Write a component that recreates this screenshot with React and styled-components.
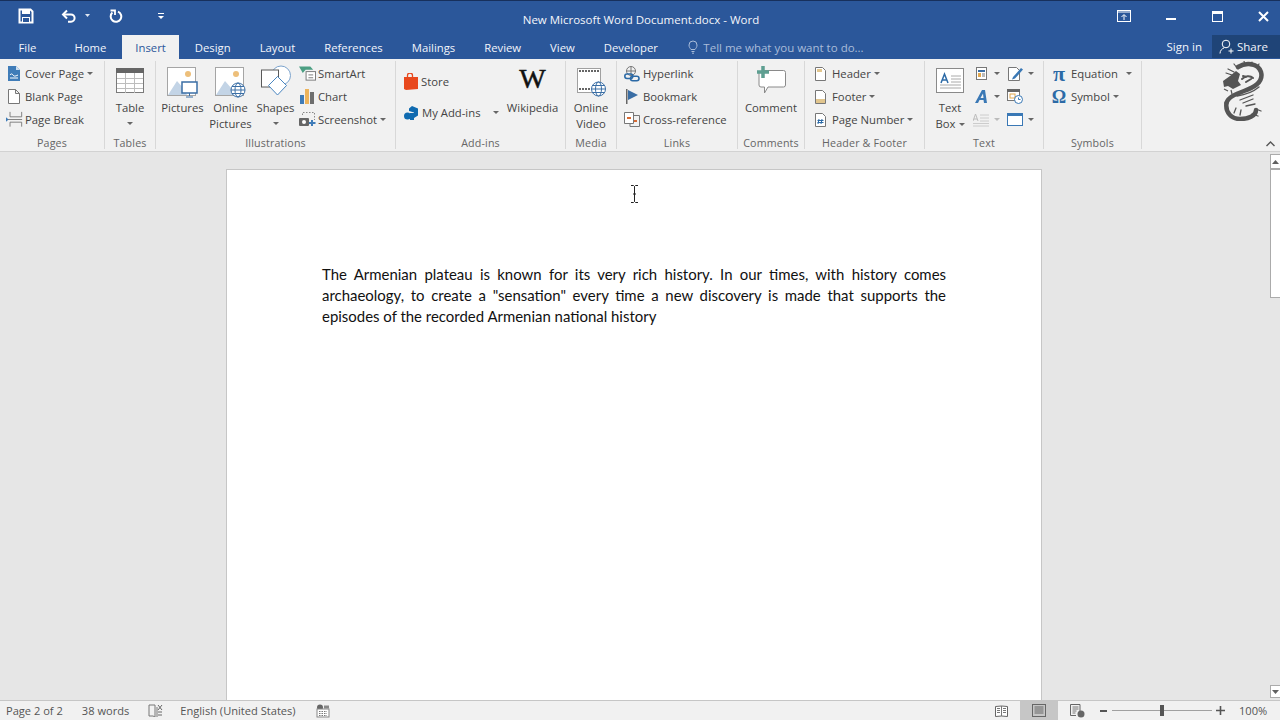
import React from "react";
import styled, { createGlobalStyle } from "styled-components";

const GlobalStyle = createGlobalStyle`
  html, body {
    margin: 0;
    padding: 0;
    width: 1280px;
    height: 720px;
    overflow: hidden;
    font-family: "Open Sans", "Noto Sans", sans-serif;
  }
`;

const Window = styled.div`
  width: 1280px;
  height: 720px;
  display: flex;
  flex-direction: column;
  position: relative;
  overflow: hidden;
  background: #e6e6e6;
`;

/* title bar */
const TitleBar = styled.div`
  height: 35px;
  flex: none;
  box-sizing: border-box;
  border-top: 1px solid #17305c;
  background: #2b579a;
  display: grid;
  grid-template-columns: 1fr auto 1fr;
  align-items: start;
  color: #fff;
`;

const Qat = styled.div`
  display: flex;
  align-items: center;
  padding-left: 18px;
  height: 30px;
`;

const QatSlot = styled.div`
  display: flex;
  align-items: center;
  justify-content: center;
  margin-right: ${({ $gap }) => $gap || 0}px;
`;

const DocTitle = styled.div`
  font-size: 11.5px;
  line-height: 16px;
  color: #f4f6fa;
  padding-left: 2px;
  padding-top: 11px;
`;

const WinButtons = styled.div`
  display: flex;
  justify-content: flex-end;
  align-items: center;
  height: 30px;
  padding-right: 11px;
  gap: 35.5px;
`;

/* tab row */
const TabRow = styled.div`
  height: 24px;
  flex: none;
  background: #2b579a;
  display: flex;
  align-items: stretch;
  color: #fff;
`;

const Tab = styled.div`
  padding: 0 ${({ $active }) => ($active ? 13 : 14.5)}px;
  margin: 0 ${({ $active }) => ($active ? 1.5 : 0)}px;
  display: flex;
  align-items: center;
  font-size: 11.3px;
  color: ${({ $active }) => ($active ? "#2b579a" : "#f2f5fa")};
  background: ${({ $active }) => ($active ? "#f1f1f1" : "transparent")};
`;

const FileTab = styled(Tab)`
  padding: 0 23.5px 0 18.5px;
`;

const TellMe = styled.div`
  display: flex;
  align-items: center;
  gap: 5px;
  margin-left: 16px;
  font-size: 11.5px;
  color: #a9bcd9;
`;

const RightTabs = styled.div`
  margin-left: auto;
  display: flex;
  align-items: stretch;
`;

const SignIn = styled.div`
  display: flex;
  align-items: center;
  font-size: 11.5px;
  padding: 0 10px 2px 0;
  color: #f2f5fa;
`;

const Share = styled.div`
  width: 68px;
  box-sizing: border-box;
  margin-bottom: 1px;
  padding: 0 0 1px 7px;
  background: #1f4477;
  display: flex;
  align-items: center;
  gap: 3px;
  font-size: 11.5px;
  color: #f2f5fa;
`;

/* ribbon */
const Ribbon = styled.div`
  height: 93px;
  flex: none;
  box-sizing: border-box;
  background: #f1f1f1;
  border-bottom: 1px solid #d2d2d2;
  display: flex;
  position: relative;
  color: #444;
`;

const Group = styled.div`
  width: ${({ $w }) => $w}px;
  flex: none;
  box-sizing: border-box;
  height: 88px;
  margin-top: 2px;
  border-right: 1px solid #d8d8d8;
  display: flex;
  flex-direction: column;
`;

const GroupBody = styled.div`
  height: 75px;
  flex: none;
  display: flex;
  padding-left: ${({ $pl }) => $pl || 0}px;
`;

const GroupLabel = styled.div`
  flex: 1;
  text-align: center;
  font-size: 10.7px;
  letter-spacing: 0.15px;
  line-height: 14px;
  color: #666;
`;

const SmallStack = styled.div`
  display: flex;
  flex-direction: column;
  padding-top: 1px;
  margin-left: ${({ $ml }) => $ml || 0}px;
  margin-right: ${({ $mr }) => $mr || 0}px;
`;

const SmallButton = styled.div`
  height: ${({ $h }) => $h || 23}px;
  display: flex;
  align-items: center;
  font-size: 11.3px;
  white-space: nowrap;
  color: #444;
`;

const IconBox = styled.span`
  width: ${({ $w }) => $w || 16}px;
  margin-right: ${({ $mr }) => $mr ?? 2}px;
  display: inline-flex;
  justify-content: center;
  align-items: center;
  flex: none;
`;

const Caret = styled.span`
  display: inline-block;
  width: 0;
  height: 0;
  margin-left: ${({ $ml }) => $ml ?? 3}px;
  vertical-align: middle;
  border-left: 3px solid transparent;
  border-right: 3px solid transparent;
  border-top: 3px solid ${({ $dim }) => ($dim ? "#bbb" : "#666")};
`;

const LargeCaret = styled(Caret)`
  margin: 6px 0 0 0;
`;

const LargeButton = styled.div`
  width: ${({ $w }) => $w}px;
  margin-left: ${({ $ml }) => $ml || 0}px;
  flex: none;
  display: flex;
  flex-direction: column;
  align-items: center;
  font-size: 11.3px;
  line-height: 16px;
  text-align: center;
  color: #444;
`;

const LargeIcon = styled.div`
  height: 39px;
  box-sizing: border-box;
  padding-bottom: ${({ $pb }) => $pb || 0}px;
  display: flex;
  align-items: flex-end;
  justify-content: center;
`;

const LargeText = styled.div`
  white-space: nowrap;
`;

const DragonBox = styled.div`
  position: absolute;
  left: 1222px;
  top: 2px;
`;

const Collapse = styled.div`
  position: absolute;
  right: 5px;
  bottom: 4px;
  display: flex;
`;

/* document */
const DocArea = styled.div`
  flex: 1;
  min-height: 0;
  display: flex;
  background: #e6e6e6;
  overflow: hidden;
`;

const PageColumn = styled.div`
  flex: 1;
  display: flex;
  padding-top: 17px;
  padding-left: 226px;
`;

const Page = styled.div`
  width: 816px;
  height: 700px;
  box-sizing: border-box;
  background: #fff;
  border: 1px solid #c6c6c6;
  padding: 94px 95px 0 95px;
`;

const Paragraph = styled.p`
  margin: 0;
  font-family: "Lato", "Open Sans", sans-serif;
  font-size: 14.95px;
  line-height: 21px;
  color: #111;
  text-align: justify;
`;

const ScrollBar = styled.div`
  width: 10px;
  flex: none;
  display: flex;
  flex-direction: column;
  background: #e6e6e6;
  padding: 2px 0;
`;

const ScrollArrow = styled.div`
  height: 16px;
  flex: none;
  box-sizing: border-box;
  background: #fff;
  border: 1px solid #ababab;
  border-bottom-width: 2px;
  border-right: none;
  display: flex;
  align-items: center;
  justify-content: center;
`;

const ScrollArrowDown = styled(ScrollArrow)`
  height: 13px;
  border-bottom-width: 1px;
`;

const ScrollThumb = styled.div`
  height: 128px;
  flex: none;
  box-sizing: border-box;
  background: #fff;
  border: 1px solid #ababab;
  border-top: none;
  border-right: none;
`;

const ScrollSpace = styled.div`
  flex: 1;
`;

const CursorBox = styled.div`
  position: absolute;
  left: 630px;
  top: 185px;
  display: flex;
`;

/* status bar */
const StatusBar = styled.div`
  height: 20px;
  flex: none;
  box-sizing: border-box;
  border-top: 1px solid #c6c6c6;
  background: #f1f1f1;
  display: flex;
  align-items: stretch;
  font-size: 11.1px;
  color: #555;
`;

const StatusItem = styled.div`
  display: flex;
  align-items: center;
  margin-left: ${({ $ml }) => $ml || 0}px;
  white-space: nowrap;
`;

const StatusRight = styled.div`
  margin-left: auto;
  display: flex;
  align-items: stretch;
`;

const ViewButton = styled.div`
  width: 38px;
  display: flex;
  align-items: center;
  justify-content: center;
  background: ${({ $active }) => ($active ? "#c6c6c6" : "transparent")};
`;

const ZoomBar = styled.div`
  display: flex;
  align-items: center;
  margin-left: 4px;
  gap: 4px;
`;

const ZoomTrack = styled.div`
  width: 100px;
  height: 1px;
  background: #a0a0a0;
  position: relative;
`;

const ZoomKnob = styled.div`
  position: absolute;
  left: 48px;
  top: -5px;
  width: 4px;
  height: 11px;
  background: #555;
`;

const ZoomPct = styled.div`
  width: 41px;
  margin-left: 14px;
  display: flex;
  align-items: center;
`;

const Pi = styled.span`
  font-family: "Liberation Serif", serif;
  font-size: ${({ $size }) => $size}px;
  font-weight: 700;
  color: #2c6aa6;
  line-height: 16px;
`;

const WikiW = styled.span`
  display: block;
  font-family: "Liberation Serif", serif;
  font-size: 28px;
  line-height: 28px;
  color: #111;
  -webkit-text-stroke: 0.5px #111;
`;

const Ico = ({ w, h, children }) => (
  <svg width={w} height={h} viewBox={`0 0 ${w} ${h}`} fill="none" style={{ display: "block" }}>
    {children}
  </svg>
);

const SaveIcon = () => (
  <Ico w={16} h={16}>
    <path d="M1.5 1.5h11l2 2v11h-13z" stroke="#fff" strokeWidth="2" />
    <rect x="4" y="2" width="8" height="4" fill="#fff" />
    <rect x="4.5" y="9.5" width="7" height="5" stroke="#fff" fill="#2b579a" />
  </Ico>
);
const UndoIcon = () => (
  <Ico w={16} h={14}>
    <path d="M6 1.5L2 5.5l4 4" stroke="#fff" strokeWidth="2" />
    <path d="M2.5 5.5H10a3.6 3.6 0 0 1 0 7.2H7" stroke="#fff" strokeWidth="2" />
  </Ico>
);
const RedoIcon = () => (
  <Ico w={14} h={14}>
    <path d="M9 2.6A5.300 5.300 0 1 1 3.400 3.600" stroke="#fff" strokeWidth="2" />
    <path d="M1.500 1.500h4.500v4.500" stroke="#fff" strokeWidth="1.800" />
  </Ico>
);
const CustomizeIcon = () => (
  <Ico w={8} h={8}>
    <path d="M1 1.5h6" stroke="#fff" />
    <path d="M1 4h6L4 7z" fill="#fff" />
  </Ico>
);
const WhiteCaret = () => (
  <Ico w={7} h={4}>
    <path d="M1 0h5L3.500 3z" fill="#dfe6f1" />
  </Ico>
);
const DisplayIcon = () => (
  <Ico w={14} h={12}>
    <rect x=".5" y=".5" width="13" height="11" stroke="#fff" />
    <path d="M1 2h12" stroke="#fff" />
    <path d="M7 10V5M4.500 7L7 4.500 9.500 7" stroke="#fff" />
  </Ico>
);
const MinIcon = () => (
  <Ico w={10} h={12}>
    <rect y="8" width="10" height="2" fill="#fff" />
  </Ico>
);
const MaxIcon = () => (
  <Ico w={11} h={11}>
    <rect x=".5" y=".5" width="10" height="10" stroke="#fff" />
    <rect x="1" y="1" width="9" height="2" fill="#fff" />
  </Ico>
);
const CloseIcon = () => (
  <Ico w={11} h={11}>
    <path d="M1 1l9 9M10 1l-9 9" stroke="#fff" strokeWidth="2" />
  </Ico>
);
const BulbIcon = () => (
  <Ico w={10} h={14}>
    <path d="M3 9.500C2 8 1 7.200 1 5a4 4 0 0 1 8 0c0 2.200-1 3-2 4.500z" stroke="#a9bcd9" />
    <path d="M3.500 11.500h3M4 13.200h2" stroke="#a9bcd9" />
  </Ico>
);
const ShareIcon = () => (
  <Ico w={15} h={15}>
    <circle cx="7" cy="5" r="3.800" stroke="#fff" />
    <path d="M1 14.500c0-3 2.200-5 4.200-5.600M9.500 12h5M12 9.500v5" stroke="#fff" />
  </Ico>
);

const CoverIcon = () => (
  <Ico w={12} h={15}>
    <path d="M0 0h8l4 4v11H0z" fill="#3f7cb8" />
    <path d="M8 0v4h4" fill="#cfe0f0" />
    <path d="M2 9c1-1.500 2-1.500 3 0s2 1.500 5 0M2 12h8" stroke="#fff" />
  </Ico>
);
const BlankIcon = () => (
  <Ico w={12} h={15}>
    <path d="M.5.5h7l4 4v10H.5zM7.500.5v4h4" stroke="#777" fill="#fff" />
  </Ico>
);
const BreakIcon = () => (
  <Ico w={19} h={17}>
    <path d="M4.500 0v5.500h13V0M4.500 16.500V11.500h13v5" stroke="#777" />
    <path d="M1 8.500h17" stroke="#777" />
    <path d="M0 6l3 2.500L0 11z" fill="#3f7cb8" />
  </Ico>
);
const TableIcon = () => (
  <Ico w={28} h={25}>
    <rect x=".5" y=".5" width="27" height="24" fill="#fff" stroke="#7a7a7a" />
    <rect width="28" height="5" fill="#666" />
    <path d="M1 10.500h26M1 15.500h26M1 20.500h26M9.500 5v20M18.500 5v20" stroke="#bdbdbd" />
  </Ico>
);
const PictureBase = () => (
  <>
    <rect x=".5" y=".5" width="28" height="28" fill="#fff" stroke="#a5a5a5" />
    <circle cx="21" cy="7" r="3" fill="#edbf7a" />
    <path d="M1 28l9-14 7 8 3 6z" fill="#c3d4e6" />
  </>
);
const PicturesIcon = () => (
  <Ico w={31} h={31}>
    <PictureBase />
    <rect x="15" y="15" width="15" height="11" fill="#fff" stroke="#3a6ea5" strokeWidth="1.500" />
    <path d="M22.500 26v3M19 30h7" stroke="#3a6ea5" />
  </Ico>
);
const OnlinePicturesIcon = () => (
  <Ico w={31} h={31}>
    <PictureBase />
    <circle cx="23" cy="23" r="7" fill="#fff" stroke="#3a6ea5" />
    <ellipse cx="23" cy="23" rx="3" ry="7" stroke="#3a6ea5" />
    <path d="M16 23h14M17 19.500h12M17 26.500h12" stroke="#3a6ea5" />
  </Ico>
);
const ShapesIcon = () => (
  <Ico w={30} h={31}>
    <circle cx="20" cy="10.500" r="9.500" fill="#fff" stroke="#7ba3cd" />
    <rect x=".5" y="5" width="17" height="17" fill="#fff" stroke="#5a5a5a" />
    <path d="M16.500 11.500l9 9-9 9.500-9-9.500z" fill="#fff" stroke="#4a86c0" />
  </Ico>
);
const SmartArtIcon = () => (
  <Ico w={18} h={17}>
    <path d="M0 1h12l3 3.500H7L4 8z" fill="#4c9f83" />
    <rect x="7.500" y="6.500" width="10" height="9" fill="#fff" stroke="#777" />
    <path d="M10 10h5M10 13h5" stroke="#777" />
  </Ico>
);
const ChartIcon = () => (
  <Ico w={15} h={15}>
    <rect y="6" width="4" height="9" fill="#3f7cb8" />
    <rect x="5" width="4" height="15" fill="#edb45c" />
    <rect x="10" y="3" width="4" height="12" fill="#6e6e6e" />
  </Ico>
);
const ScreenshotIcon = () => (
  <Ico w={17} h={15}>
    <path d="M3.500 3V.5h12V8" stroke="#888" strokeDasharray="1.500 1.500" />
    <rect y="6" width="10" height="8" rx="1" fill="#666" />
    <circle cx="5" cy="10" r="2" fill="#fff" />
    <path d="M13 8v6M10 11h6.500" stroke="#3f7cb8" strokeWidth="2" />
  </Ico>
);
const StoreIcon = () => (
  <Ico w={14} h={17}>
    <path d="M0 4h14v12l-12 1L0 16z" fill="#e8481d" />
    <path d="M3.500 5V2.500a2.500 2.500 0 0 1 5 0V5" stroke="#e8481d" strokeWidth="1.300" />
  </Ico>
);
const AddinsIcon = () => (
  <Ico w={14} h={14}>
    <path d="M8 0l6 2.500v7L10 12V6.500L5 5V2.500z" fill="#0f6ab0" />
    <circle cx="3.500" cy="10" r="3.500" fill="#0f6ab0" />
    <rect x="6" y="7" width="4" height="7" fill="#0f6ab0" />
  </Ico>
);
const VideoIcon = () => (
  <Ico w={29} h={29}>
    <rect x=".5" y=".5" width="23" height="24" fill="#fff" stroke="#a0a0a0" />
    <path d="M2 3h20M2 21h12" stroke="#666" strokeWidth="2" strokeDasharray="2 1" />
    <circle cx="21.500" cy="21" r="7" fill="#fff" stroke="#3a6ea5" />
    <ellipse cx="21.500" cy="21" rx="3" ry="7" stroke="#3a6ea5" />
    <path d="M14.500 21h14M15.500 17.500h12M15.500 24.500h12" stroke="#3a6ea5" />
  </Ico>
);
const HyperlinkIcon = () => (
  <Ico w={16} h={16}>
    <circle cx="7" cy="5" r="4.500" stroke="#777" />
    <path d="M2.500 5h9M7 .5v9" stroke="#777" />
    <rect x=".8" y="8" width="8" height="4.500" rx="2.200" stroke="#2c6aa6" strokeWidth="1.600" />
    <rect x="6.500" y="10.200" width="8.500" height="4.500" rx="2.200" stroke="#2c6aa6" strokeWidth="1.600" />
  </Ico>
);
const BookmarkIcon = () => (
  <Ico w={12} h={15}>
    <rect width="1.500" height="15" fill="#666" />
    <path d="M2 1l10 5-10 5z" fill="#3a6ea5" />
  </Ico>
);
const CrossRefIcon = () => (
  <Ico w={16} h={15}>
    <path d="M.5.5h9v11h-9z" fill="#fff" stroke="#777" />
    <path d="M10 3.500h5.500v11H6V12" stroke="#777" />
    <path d="M3 6h4" stroke="#d96a32" strokeWidth="2" />
    <path d="M10 9h3" stroke="#d96a32" strokeWidth="2" />
  </Ico>
);
const CommentIcon = () => (
  <Ico w={31} h={30}>
    <path d="M7 5.500h20.500a2 2 0 0 1 2 2V20a2 2 0 0 1-2 2H12l-3.500 6v-6H5a2 2 0 0 1-2-2V8" fill="#fff" stroke="#8a8a8a" />
    <path d="M7 1v12M1 7h12" stroke="#5e9f91" strokeWidth="3.500" />
  </Ico>
);
const HeaderIcon = () => (
  <Ico w={11} h={14}>
    <path d="M.5.5h7l3 3v10H.5z" fill="#fff" stroke="#777" />
    <rect x="2" y="2" width="5" height="3" fill="#e2c68e" />
  </Ico>
);
const FooterIcon = () => (
  <Ico w={11} h={14}>
    <path d="M.5.5h7l3 3v10H.5z" fill="#fff" stroke="#777" />
    <rect x="1" y="9" width="9" height="4" fill="#e2c68e" />
  </Ico>
);
const PageNumIcon = () => (
  <Ico w={11} h={14}>
    <path d="M.5.5h7l3 3v10H.5z" fill="#fff" stroke="#777" />
    <path d="M4 6l-1 5M7 6l-1 5M2.500 7.500h6M2.500 9.500h6" stroke="#2c6aa6" />
  </Ico>
);
const TextBoxIcon = () => (
  <Ico w={28} h={25}>
    <rect x=".5" y=".5" width="27" height="24" fill="#fff" stroke="#8a8a8a" />
    <path d="M15 8h10M15 11h10M15 14h10M4 17h21M4 20h21" stroke="#aaa" />
    <path d="M5 15l3.500-9L12 15M6.200 12h4.600" stroke="#2c6aa6" strokeWidth="1.500" />
  </Ico>
);
const QuickPartsIcon = () => (
  <Ico w={11} h={13}>
    <rect x=".5" y=".5" width="10" height="12" fill="#fff" stroke="#777" />
    <rect x="2" y="3" width="7" height="2" fill="#3a6ea5" />
    <rect x="2" y="6" width="3" height="4" fill="#e2a84e" />
    <path d="M6 7h3M6 9h3" stroke="#777" />
  </Ico>
);
const SignatureIcon = () => (
  <Ico w={15} h={15}>
    <path d="M.5 1.500h8l3 3v10H.5z" fill="#fff" stroke="#777" />
    <path d="M5 11l8-9 2 1.500-8 9-3 1z" fill="#3a78b5" />
  </Ico>
);
const WordArtIcon = () => (
  <Ico w={12} h={13}>
    <path d="M0 13L7 0h3l2 13H9l-.5-3H4.500l-1.500 3zM5.500 8h3L8 3.500z" fill="#3a78b5" fillRule="evenodd" />
  </Ico>
);
const DateIcon = () => (
  <Ico w={16} h={15}>
    <rect x=".5" y=".5" width="12" height="11" fill="#fff" stroke="#777" />
    <rect width="13" height="3" fill="#666" />
    <rect x="3" y="5" width="5" height="4" stroke="#e2a84e" />
    <circle cx="11.500" cy="10.500" r="4" fill="#fff" stroke="#3a78b5" />
    <path d="M11.500 8.500v2h2" stroke="#3a78b5" />
  </Ico>
);
const DropCapIcon = () => (
  <Ico w={16} h={14}>
    <path d="M0 8l2.500-7L5 8M1 6h3" stroke="#bbb" />
    <path d="M7 2h9M7 5h9M7 8h9M0 10.500h16M0 13h16" stroke="#ccc" />
  </Ico>
);
const ObjectIcon = () => (
  <Ico w={16} h={13}>
    <rect x=".5" y=".5" width="15" height="12" fill="#fff" stroke="#3a78b5" />
    <rect width="16" height="3" fill="#3a78b5" />
  </Ico>
);

const DragonIcon = () => (
  <svg width="42" height="60" viewBox="0 0 42 60" fill="none" style={{ display: "block", filter: "blur(0.6px)" }}>
    <g stroke="#555" strokeLinecap="round">
      <path d="M16 6C24 1 36 2 39 11 42 22 30 27 22 30 14 33 6 36 4.500 42" strokeWidth="4.500" />
      <path d="M4.500 42C3 52 10 58 18 58 26 58 34 55 34 49" strokeWidth="4.500" />
      <path d="M6 8l6 3M4 12l6 2M12 3l4 5M22 0l1 4M30 1l-1 4M37 3l-2 3" strokeWidth="1.200" />
      <path d="M20 18c3-3 8-4 11-1M24 21l5-3M21 15l3 1" strokeWidth="2" />
      <path d="M15 35C22 34 31 31 37 26M18 39l13-5M21 42l10-4M24 45l9-2" strokeWidth="1.300" />
      <path d="M34 48l5 2M30 53l6 2M12 52l2-5M18 54l1-5" strokeWidth="1.300" />
    </g>
    <path d="M1 20l7-5 6-5 4 3-2 7 3 4-8 4-5-3-4 1z" fill="#555" />
    <path d="M2 28l4 2M9 29l1 4" stroke="#555" strokeWidth="1.200" />
  </svg>
);

const Chevron = () => (
  <Ico w={9} h={6}>
    <path d="M.5 5L4.500 1l4 4" stroke="#555" strokeWidth="1.400" />
  </Ico>
);
const ScrollTri = ({ down }) => (
  <Ico w={7} h={4}>
    <path d={down ? "M0 0h7L3.500 4z" : "M0 4h7L3.500 0z"} fill="#606060" />
  </Ico>
);
const IBeam = () => (
  <Ico w={9} h={18}>
    <path d="M1 .5h2.500L4.500 1.500 5.500.5H8M4.500 1.500v15M1 17.500h2.500l1-1 1 1H8M3 9h3" stroke="#222" />
  </Ico>
);
const ProofIcon = () => (
  <Ico w={15} h={13}>
    <path d="M7 1H1v11h4l2 1V1zM9 3v10" stroke="#777" />
    <path d="M10 1l4 5M14 1l-4 5M10 8h4M10 11h4" stroke="#666" />
  </Ico>
);
const MacroIcon = () => (
  <Ico w={14} h={14}>
    <circle cx="4" cy="3.500" r="3" fill="#666" />
    <rect x="1" y="5" width="12" height="8" fill="#fff" stroke="#888" />
    <path d="M8 1.500h5v3H8z" fill="#888" />
    <path d="M3 7.500h8M3 9.500h8M3 11.500h8" stroke="#777" strokeDasharray="1.500 1" />
  </Ico>
);
const ReadIcon = () => (
  <Ico w={13} h={12}>
    <path d="M.5 1.500L6.500 1l6 .5v10l-6-.5-6 .5z" stroke="#666" fill="#fff" />
    <path d="M6.500 1v10M2 3.500h3M2 5.500h3M2 7.500h3M8 3.500h3M8 5.500h3M8 7.500h3" stroke="#777" />
  </Ico>
);
const PrintIcon = () => (
  <Ico w={14} h={13}>
    <rect x=".5" y=".5" width="13" height="12" stroke="#666" />
    <path d="M2.500 3h9M2.500 5h9M2.500 7h9M2.500 9h9" stroke="#666" />
  </Ico>
);
const WebIcon = () => (
  <Ico w={15} h={14}>
    <path d="M10 8V.5H.5v11H6" stroke="#666" />
    <path d="M2.500 3h6M2.500 5h6M2.500 7h4M2.500 9h3" stroke="#777" />
    <circle cx="11" cy="10" r="3.500" fill="#666" />
  </Ico>
);
const Minus = () => (
  <Ico w={8} h={8}>
    <rect y="3" width="7" height="2" fill="#555" />
  </Ico>
);
const Plus = () => (
  <Ico w={9} h={9}>
    <path d="M0 4.500h9M4.500 0v9" stroke="#555" strokeWidth="1.600" />
  </Ico>
);

const tabs = ["Home", "Insert", "Design", "Layout", "References", "Mailings", "Review", "View", "Developer"];

function Small({ icon, label, caret, w, mr }) {
  return (
    <SmallButton>
      <IconBox $w={w} $mr={mr}>{icon}</IconBox>
      {label}
      {caret && <Caret />}
    </SmallButton>
  );
}

function Large({ w, ml, pb, icon, lines, caret, inlineCaret }) {
  return (
    <LargeButton $w={w} $ml={ml}>
      <LargeIcon $pb={pb}>{icon}</LargeIcon>
      {lines.map((l, i) => (
        <LargeText key={l}>
          {l}
          {inlineCaret && i === lines.length - 1 && <Caret />}
        </LargeText>
      ))}
      {caret && <LargeCaret />}
    </LargeButton>
  );
}

export default function App() {
  return (
    <Window>
      <GlobalStyle />
      <TitleBar>
        <Qat>
          <QatSlot $gap={27}><SaveIcon /></QatSlot>
          <QatSlot $gap={7}><UndoIcon /></QatSlot>
          <QatSlot $gap={18}><WhiteCaret /></QatSlot>
          <QatSlot $gap={34}><RedoIcon /></QatSlot>
          <QatSlot><CustomizeIcon /></QatSlot>
        </Qat>
        <DocTitle>New Microsoft Word Document.docx - Word</DocTitle>
        <WinButtons>
          <DisplayIcon />
          <MinIcon />
          <MaxIcon />
          <CloseIcon />
        </WinButtons>
      </TitleBar>

      <TabRow>
        <FileTab>File</FileTab>
        {tabs.map((t) => (
          <Tab key={t} $active={t === "Insert"}>{t}</Tab>
        ))}
        <TellMe>
          <BulbIcon />
          Tell me what you want to do...
        </TellMe>
        <RightTabs>
          <SignIn>Sign in</SignIn>
          <Share>
            <ShareIcon />
            Share
          </Share>
        </RightTabs>
      </TabRow>

      <Ribbon>
        <Group $w={105}>
          <GroupBody $pl={6}>
            <SmallStack>
              <Small icon={<CoverIcon />} label="Cover Page" caret w={15} mr={4} />
              <Small icon={<BlankIcon />} label="Blank Page" w={15} mr={4} />
              <Small icon={<BreakIcon />} label="Page Break" w={17} mr={2} />
            </SmallStack>
          </GroupBody>
          <GroupLabel>Pages</GroupLabel>
        </Group>

        <Group $w={51}>
          <GroupBody>
            <Large w={50} pb={7} icon={<TableIcon />} lines={["Table"]} caret />
          </GroupBody>
          <GroupLabel>Tables</GroupLabel>
        </Group>

        <Group $w={240}>
          <GroupBody $pl={3}>
            <Large w={47} pb={2} icon={<PicturesIcon />} lines={["Pictures"]} />
            <Large w={47} ml={1} pb={2} icon={<OnlinePicturesIcon />} lines={["Online", "Pictures"]} />
            <Large w={41} ml={1} pb={4} icon={<ShapesIcon />} lines={["Shapes"]} caret />
            <SmallStack $ml={3}>
              <Small icon={<SmartArtIcon />} label="SmartArt" w={17} mr={2} />
              <Small icon={<ChartIcon />} label="Chart" w={17} mr={2} />
              <Small icon={<ScreenshotIcon />} label="Screenshot" caret w={17} mr={2} />
            </SmallStack>
          </GroupBody>
          <GroupLabel>Illustrations</GroupLabel>
        </Group>

        <Group $w={170}>
          <GroupBody $pl={8}>
            <SmallStack>
              <SmallButton $h={39}>
                <IconBox $w={14} $mr={3}><StoreIcon /></IconBox>Store
              </SmallButton>
              <SmallButton>
                <IconBox $w={14} $mr={4}><AddinsIcon /></IconBox>My Add-ins
                <Caret $ml={12} />
              </SmallButton>
            </SmallStack>
            <Large w={66} ml={1} pb={7} icon={<WikiW>W</WikiW>} lines={["Wikipedia"]} />
          </GroupBody>
          <GroupLabel>Add-ins</GroupLabel>
        </Group>

        <Group $w={51}>
          <GroupBody>
            <Large w={50} pb={3} icon={<VideoIcon />} lines={["Online", "Video"]} />
          </GroupBody>
          <GroupLabel>Media</GroupLabel>
        </Group>

        <Group $w={121}>
          <GroupBody $pl={7}>
            <SmallStack>
              <Small icon={<HyperlinkIcon />} label="Hyperlink" w={16} mr={3} />
              <Small icon={<BookmarkIcon />} label="Bookmark" w={16} mr={3} />
              <Small icon={<CrossRefIcon />} label="Cross-reference" w={16} mr={3} />
            </SmallStack>
          </GroupBody>
          <GroupLabel>Links</GroupLabel>
        </Group>

        <Group $w={67}>
          <GroupBody>
            <Large w={66} pb={5} icon={<CommentIcon />} lines={["Comment"]} />
          </GroupBody>
          <GroupLabel>Comments</GroupLabel>
        </Group>

        <Group $w={120}>
          <GroupBody $pl={9}>
            <SmallStack>
              <Small icon={<HeaderIcon />} label="Header" caret w={12} mr={6} />
              <Small icon={<FooterIcon />} label="Footer" caret w={12} mr={6} />
              <Small icon={<PageNumIcon />} label="Page Number" caret w={12} mr={6} />
            </SmallStack>
          </GroupBody>
          <GroupLabel>Header &amp; Footer</GroupLabel>
        </Group>

        <Group $w={119}>
          <GroupBody>
            <Large w={48} ml={1} pb={7} icon={<TextBoxIcon />} lines={["Text", "Box"]} inlineCaret />
            <SmallStack $ml={-1}>
              <Small icon={<QuickPartsIcon />} caret w={16} mr={2} />
              <Small icon={<WordArtIcon />} caret w={16} mr={2} />
              <SmallButton>
                <IconBox $w={16} $mr={2}><DropCapIcon /></IconBox>
                <Caret $dim />
              </SmallButton>
            </SmallStack>
            <SmallStack $ml={7}>
              <Small icon={<SignatureIcon />} caret w={16} mr={2} />
              <Small icon={<DateIcon />} w={16} mr={2} />
              <Small icon={<ObjectIcon />} caret w={16} mr={2} />
            </SmallStack>
          </GroupBody>
          <GroupLabel>Text</GroupLabel>
        </Group>

        <Group $w={98}>
          <GroupBody $pl={8}>
            <SmallStack>
              <SmallButton>
                <IconBox $w={14} $mr={5}><Pi $size={22}>π</Pi></IconBox>Equation
                <Caret $ml={8} />
              </SmallButton>
              <SmallButton>
                <IconBox $w={14} $mr={5}><Pi $size={18}>Ω</Pi></IconBox>Symbol
                <Caret />
              </SmallButton>
            </SmallStack>
          </GroupBody>
          <GroupLabel>Symbols</GroupLabel>
        </Group>

        <DragonBox><DragonIcon /></DragonBox>
        <Collapse><Chevron /></Collapse>
      </Ribbon>

      <DocArea>
        <PageColumn>
          <Page>
            <Paragraph>
              The Armenian plateau is known for its very rich history. In our times, with history comes
              archaeology, to create a "sensation" every time a new discovery is made that supports the
              episodes of the recorded Armenian national history
            </Paragraph>
          </Page>
        </PageColumn>
        <ScrollBar>
          <ScrollArrow><ScrollTri /></ScrollArrow>
          <ScrollThumb />
          <ScrollSpace />
          <ScrollArrowDown><ScrollTri down /></ScrollArrowDown>
        </ScrollBar>
      </DocArea>

      <StatusBar>
        <StatusItem $ml={6}>Page 2 of 2</StatusItem>
        <StatusItem $ml={19}>38 words</StatusItem>
        <StatusItem $ml={19}><ProofIcon /></StatusItem>
        <StatusItem $ml={17}>English (United States)</StatusItem>
        <StatusItem $ml={20}><MacroIcon /></StatusItem>
        <StatusRight>
          <ViewButton><ReadIcon /></ViewButton>
          <ViewButton $active><PrintIcon /></ViewButton>
          <ViewButton><WebIcon /></ViewButton>
          <ZoomBar>
            <Minus />
            <ZoomTrack><ZoomKnob /></ZoomTrack>
            <Plus />
          </ZoomBar>
          <ZoomPct>100%</ZoomPct>
        </StatusRight>
      </StatusBar>

      <CursorBox><IBeam /></CursorBox>
    </Window>
  );
}
